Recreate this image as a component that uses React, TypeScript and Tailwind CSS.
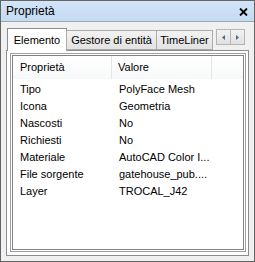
import React from "react";

const rows: [string, string][] = [
  ["Tipo", "PolyFace Mesh"],
  ["Icona", "Geometria"],
  ["Nascosti", "No"],
  ["Richiesti", "No"],
  ["Materiale", "AutoCAD Color I..."],
  ["File sorgente", "gatehouse_pub...."],
  ["Layer", "TROCAL_J42"],
];

export default function App() {
  return (
    <div className="w-[255px] h-[262px] border border-[#646464] bg-[#f0f0f0] flex flex-col font-['Liberation_Sans',sans-serif] text-black">
      {/* title bar */}
      <div className="h-[21px] shrink-0 bg-gradient-to-b from-[#d3e5f8] to-[#c3daf2] border-b border-[#9aa6b3] flex items-center justify-between pl-[5px] pr-[6px]">
        <span className="text-[12px] leading-none">Proprietà</span>
        <svg width="9" height="8" viewBox="0 0 9 8" className="mt-[1px]">
          <path d="M1 0.5 L8 7.5 M8 0.5 L1 7.5" stroke="#000" strokeWidth="1.8" />
        </svg>
      </div>
      {/* body */}
      <div className="flex-1 flex flex-col px-[5px] pt-[6px] pb-[5px]">
        {/* tabs */}
        <div className="h-[22px] shrink-0 flex items-end relative z-10">
          <div className="h-[23px] -mb-px ml-[1px] w-[60px] bg-white border border-b-0 border-[#898c95] flex items-center justify-center text-[11px]">
            Elemento
          </div>
          <div className="h-[20px] w-[91px] -ml-px bg-gradient-to-b from-[#f2f2f2] to-[#e3e3e3] border border-[#acacac] flex items-center justify-center text-[11px]">
            Gestore di entità
          </div>
          <div className="h-[20px] w-[57px] -ml-px bg-gradient-to-b from-[#f2f2f2] to-[#e3e3e3] border border-[#acacac] flex items-center justify-center text-[11px]">
            TimeLiner
          </div>
          <div className="absolute right-[4px] top-[1px] flex">
            <div className="w-[15px] h-[16px] border border-[#b5b5b5] bg-gradient-to-b from-[#f2f2f2] to-[#e1e1e1] flex items-center justify-center">
              <svg width="3" height="5" viewBox="0 0 3 5">
                <path d="M3 0 L0 2.5 L3 5 Z" fill="#4a6a8a" />
              </svg>
            </div>
            <div className="w-[15px] h-[16px] -ml-px border border-[#b5b5b5] bg-gradient-to-b from-[#f2f2f2] to-[#e1e1e1] flex items-center justify-center">
              <svg width="3" height="5" viewBox="0 0 3 5">
                <path d="M0 0 L3 2.5 L0 5 Z" fill="#4a6a8a" />
              </svg>
            </div>
          </div>
        </div>
        {/* panel */}
        <div className="flex-1 flex flex-col border border-[#898c95] bg-white pt-[2px] pl-[3px] pr-[2px] pb-[3px]">
          <div className="flex-1 flex flex-col border border-[#a0a0a0] p-px">
            <div className="flex-1 flex flex-col border border-[#828282] text-[11px]">
              <div className="h-[23px] shrink-0 flex items-center bg-gradient-to-b from-[#ffffff] to-[#f7f8f9]">
                <div className="w-[99px] pl-[7px] h-full flex items-center border-r border-[#e3e5e7]">Proprietà</div>
                <div className="w-[100px] pl-[6px] h-full flex items-center border-r border-[#e3e5e7]">Valore</div>
              </div>
              <div className="flex flex-col pt-[2px]">
                {rows.map(([k, v]) => (
                  <div key={k} className="h-[17px] flex items-center">
                    <div className="w-[99px] pl-[7px]">{k}</div>
                    <div className="pl-[7px]">{v}</div>
                  </div>
                ))}
              </div>
            </div>
          </div>
        </div>
      </div>
    </div>
  );
}
